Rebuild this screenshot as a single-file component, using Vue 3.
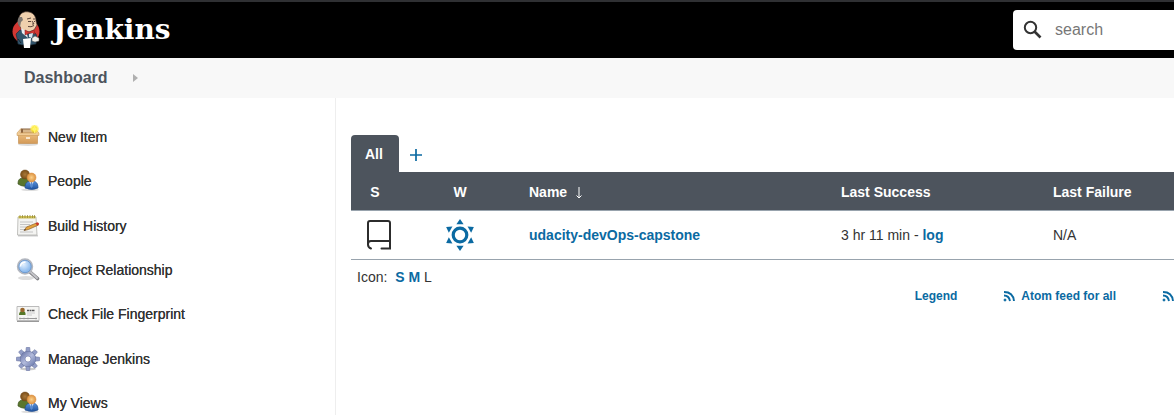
<script setup>
const tasks = [
  { label: 'New Item', icon: 'box' },
  { label: 'People', icon: 'people' },
  { label: 'Build History', icon: 'notepad' },
  { label: 'Project Relationship', icon: 'lens' },
  { label: 'Check File Fingerprint', icon: 'card' },
  { label: 'Manage Jenkins', icon: 'gear' },
  { label: 'My Views', icon: 'people' },
]
const teeth = [0, 45, 90, 135, 180, 225, 270, 315]
const rays = [0, 60, 120, 180, 240, 300]
</script>

<template>
  <div class="page">
    <svg class="defs" width="0" height="0" aria-hidden="true">
      <defs>
        <linearGradient id="gBox" x1="0" y1="0" x2="0" y2="1"><stop offset="0" stop-color="#eec080" /><stop offset="1" stop-color="#d39a58" /></linearGradient>
        <linearGradient id="gBlue" x1="0" y1="0" x2="0" y2="1"><stop offset="0" stop-color="#5b93dc" /><stop offset="1" stop-color="#1e52a0" /></linearGradient>
        <radialGradient id="gSkin"><stop offset="0" stop-color="#fbd089" /><stop offset="1" stop-color="#dd9240" /></radialGradient>
        <radialGradient id="gBrown"><stop offset="0" stop-color="#a9783a" /><stop offset="1" stop-color="#7a4d17" /></radialGradient>
        <linearGradient id="gGear" x1="0" y1="0" x2="1" y2="1"><stop offset="0" stop-color="#7883b2" /><stop offset=".5" stop-color="#b2bbdc" /><stop offset="1" stop-color="#7886b6" /></linearGradient>
        <radialGradient id="gLens" cx=".4" cy=".35"><stop offset="0" stop-color="#e4f1ff" /><stop offset="1" stop-color="#8fbcee" /></radialGradient>
        <radialGradient id="gGlow"><stop offset="0" stop-color="#fffbc0" /><stop offset=".45" stop-color="#ffec35" /><stop offset="1" stop-color="#ffe838" stop-opacity="0" /></radialGradient>
      </defs>
    </svg>

    <header class="header">
      <a class="brand" href="#">
        <svg class="butler" viewBox="0 0 28 38" aria-hidden="true">
          <ellipse cx="14" cy="20.500" rx="13.500" ry="12.500" fill="#d33833" />
          <path d="M4 23l4-4 12 1 4 3 1 4-1 6-5 1-2-1-7 1-4-1-1-6z" fill="#31536a" stroke="#172630" stroke-width=".6" />
          <path d="M7 7C8 2 12 0 17 1c5 1 7 5 7 9l1 4-3 5-5 2-7-2-3-5z" fill="#efd0ad" stroke="#503d35" stroke-width=".7" />
          <path d="M7 6c-2 3-2 7 1 10l1-5 2-2-1-3z" fill="#7d7771" />
          <path d="M15 8l4-1M21 8h2M16 10.500h3M22 10.500h1M20 10l2 3h-2M16 15.500q3 1 6-1" fill="none" stroke="#5c463c" stroke-width="1" />
          <path d="M9 17l5 3 2 7-6-5z" fill="#e8edf2" />
          <path d="M13 19l4 2 5-2 1 4-5-1-5 2z" fill="#d33833" stroke="#851f20" stroke-width=".5" />
          <path d="M17 23l4-1-1 5-3-1z" fill="#dce5ed" />
          <path d="M11 28l8-1-1 10h-6z" fill="#fff" />
          <path d="M20 27l3-2 4 2v3l-4 1-3-1z" fill="#f3f0e9" stroke="#555" stroke-width=".5" />
          <path d="M6 28l3 4" stroke="#172630" />
        </svg>
        <span class="wordmark">Jenkins</span>
      </a>
      <label class="search">
        <svg width="20" height="20" viewBox="0 0 20 20" fill="none" stroke="#333" aria-hidden="true">
          <circle cx="7.500" cy="7.500" r="5.700" stroke-width="2" /><path d="M11.500 11.500l6 6" stroke-width="2.600" />
        </svg>
        <input type="text" placeholder="search" aria-label="search">
      </label>
    </header>

    <nav class="crumbs" aria-label="Breadcrumb">
      <a href="#">Dashboard</a>
      <svg width="5" height="8" viewBox="0 0 5 8" aria-hidden="true"><path d="M0 0l5 4-5 4z" fill="#b0b0b0" /></svg>
    </nav>

    <div class="body">
      <nav class="side" aria-label="Tasks">
        <a v-for="task in tasks" :key="task.label" class="task" href="#">
          <svg width="24" height="24" viewBox="0 0 24 24" aria-hidden="true">
            <g v-if="task.icon === 'box'">
              <ellipse cx="12" cy="19.500" rx="10" ry="1.500" fill="#ddd" />
              <path d="M5 3.500h14v6H5z" fill="#8b6440" /><path d="M7 4.500h9l1 4H7z" fill="#d8b78c" />
              <path d="M2.500 8h19v10.500h-19z" fill="url(#gBox)" stroke="#c08a49" stroke-width=".6" />
              <path d="M5 3.500L1 8v2.500h22V8l-4-4.500 1 4.500H4z" fill="#f0cb96" stroke="#c4904f" stroke-width=".5" />
              <path d="M10 12h4v2h-4z" fill="#f9e6cb" />
              <circle cx="18.500" cy="4" r="5" fill="url(#gGlow)" /><path d="M18.500 0v8M14.500 4h8" stroke="#fff36a" stroke-width="1" />
            </g>
            <g v-else-if="task.icon === 'people'">
              <ellipse cx="14" cy="20.800" rx="9" ry="1.300" fill="#ddd" />
              <path d="M2 15c0-5 2-6 6-6s6 2 6 5v2q-6 3-12-1z" fill="#5a762d" stroke="#3b521c" stroke-width=".7" />
              <circle cx="9" cy="5.500" r="4.500" fill="url(#gBrown)" stroke="#6e471b" stroke-width=".5" />
              <path d="M9 19c0-5 2-7 6.500-7s6.500 2 6.500 7q-6 3-13 0z" fill="url(#gBlue)" stroke="#244f8d" stroke-width=".7" />
              <path d="M13 12h5l-2.500 5z" fill="#e7eff8" /><path d="M15 13h1l1 4-1.500 2-1.500-2z" fill="#5a8bd0" />
              <circle cx="15.500" cy="8.500" r="4.500" fill="url(#gSkin)" stroke="#d98a3e" stroke-width=".5" />
            </g>
            <g v-else-if="task.icon === 'notepad'">
              <path d="M2 21h20v1.500H2z" fill="#ccc" />
              <path d="M2 3h18l1 18H1.500z" fill="#f4f4f2" stroke="#b3b3af" stroke-width=".8" />
              <path d="M2.500 2h17v2.500h-17z" fill="#cfc158" /><path d="M4 1v3M6.500 1v3M9 1v3M11.500 1v3M14 1v3M16.500 1v3M18.500 1v3" stroke="#8c8232" stroke-width=".7" />
              <path d="M4 8h13M4 10.500h10M4 13h11M4 15.500h6M4 18h13" stroke="#c4c4c4" />
              <path d="M8 16.500l2.500-3.500 10-4 2 2-10 4.500z" fill="#e3a33d" stroke="#8c602e" stroke-width=".7" />
              <path d="M19.500 9.200l2-1 1.500 1-.5 1.700-1.500.5z" fill="#c9372b" /><path d="M8 16.500l1-1.500 1 1z" fill="#333" />
            </g>
            <g v-else-if="task.icon === 'lens'">
              <ellipse cx="10" cy="20" rx="8" ry="2" fill="#ddd" />
              <path d="M14 14l7.500 6.500" stroke="#808084" stroke-width="3.600" stroke-linecap="round" /><path d="M14.500 14l6.500 6" stroke="#c4c4c8" stroke-width="2" stroke-linecap="round" />
              <circle cx="9" cy="8.500" r="7.300" fill="url(#gLens)" stroke="#b3b7bf" stroke-width="1.800" /><circle cx="9" cy="8.500" r="6.200" fill="none" stroke="#6592c9" stroke-width=".8" />
              <path d="M4.500 8.500q0-4 5-4.500" fill="none" stroke="#fff" stroke-width="1.500" />
            </g>
            <g v-else-if="task.icon === 'card'">
              <path d="M1 4.500h22v14H1z" fill="#f5f5f3" stroke="#bbb" /><path d="M1 19.500h22" stroke="#999" />
              <path d="M3 13q0-4 3.500-4t3 4z" fill="#557727" /><circle cx="6.500" cy="8" r="2.300" fill="#99662b" />
              <path d="M11 8.500h8" stroke="#555" stroke-width="1.400" stroke-dasharray="2 .5" /><path d="M11 11h8M11 13h5" stroke="#ccc" />
              <path d="M3 16.500h18" stroke="#999" /><path d="M4 15.500v2M8 15.500v2M12 15.500v2M20 15.500v2" stroke="#999" stroke-width=".6" />
            </g>
            <g v-else>
              <ellipse cx="12" cy="22" rx="8" ry="1.300" fill="#ccc" />
              <path v-for="a in teeth" :key="a" d="M9.800 6l.5-5.500h3.400l.5 5.500z" fill="#929dc7" stroke="#7680aa" stroke-width=".7" :transform="`rotate(${a} 12 12)`" />
              <circle cx="12" cy="12" r="5.300" fill="none" stroke="#69749f" stroke-width="5.500" /><circle cx="12" cy="12" r="5.300" fill="none" stroke="url(#gGear)" stroke-width="4.600" />
              <circle cx="12" cy="12" r="3" fill="#fff" stroke="#7883b2" stroke-width=".7" />
            </g>
          </svg>
          <span>{{ task.label }}</span>
        </a>
      </nav>

      <main class="main">
        <div class="tabs">
          <a class="tab" href="#">All</a>
          <a class="add" href="#" aria-label="New View">
            <svg width="12" height="12" viewBox="0 0 12 12" aria-hidden="true"><path d="M6 0v12M0 6h12" stroke="#0b6aa2" stroke-width="1.700" /></svg>
          </a>
        </div>
        <table class="jobs">
          <colgroup><col class="c-s"><col class="c-w"><col class="c-name"><col class="c-success"><col></colgroup>
          <thead>
            <tr>
              <th class="status">S</th><th class="weather">W</th>
              <th><span class="sort">Name <svg width="8" height="14" viewBox="0 0 8 14" aria-label="Ascending"><path d="M4 2v11M1.500 10.500l2.500 2.500 2.500-2.500" fill="none" stroke="#fff" /></svg></span></th>
              <th>Last Success</th><th>Last Failure</th>
            </tr>
          </thead>
          <tbody>
            <tr>
              <td class="center">
                <svg width="26" height="32" viewBox="0 0 26 32" fill="none" stroke="#2c2c2c" stroke-width="2" role="img" aria-label="Not built">
                  <path d="M5 29.500q-3-1-3-4V4q0-2 2-2h18q2 0 2 2v25.500h-8.500M2 25q0-3 3-3h19" stroke-linecap="round" />
                </svg>
              </td>
              <td class="center">
                <svg width="32" height="32" viewBox="0 0 32 32" role="img" aria-label="Sunny">
                  <circle cx="16" cy="16" r="6.800" fill="none" stroke="#0b6aa2" stroke-width="3.200" />
                  <path v-for="a in rays" :key="a" d="M16 0l3.600 5.200h-7.200z" fill="#0b6aa2" :transform="`rotate(${a} 16 16)`" />
                </svg>
              </td>
              <td><a href="#">udacity-devOps-capstone</a></td>
              <td>3 hr 11 min - <a href="#">log</a></td>
              <td>N/A</td>
            </tr>
          </tbody>
        </table>
        <div class="sizes">Icon: <span class="options"><a href="#">S</a> <a href="#">M</a> L</span></div>
        <div class="feeds">
          <a href="#">Legend</a>
          <a href="#"><svg width="12" height="12" viewBox="0 0 12 12" fill="none" stroke="#0b6aa2" stroke-width="1.900" aria-hidden="true"><path d="M1 5.500q5 0 6 5.500M1 2q9 0 10 9" /><circle cx="2" cy="10" r="1" fill="#0b6aa2" stroke-width="1" /></svg>Atom feed for all</a>
          <a href="#" aria-label="Atom feed for failures"><svg width="12" height="12" viewBox="0 0 12 12" fill="none" stroke="#0b6aa2" stroke-width="1.900" aria-hidden="true"><path d="M1 5.500q5 0 6 5.500M1 2q9 0 10 9" /><circle cx="2" cy="10" r="1" fill="#0b6aa2" stroke-width="1" /></svg></a>
        </div>
      </main>
    </div>
  </div>
</template>

<style>
body { margin: 0; background: #fff; }
</style>

<style scoped>
* { box-sizing: border-box; }
.page { display: flex; flex-direction: column; height: 100vh; overflow: hidden; font: 14px/20px "Liberation Sans", Arial, sans-serif; color: #333; }
.page svg { display: block; flex: none; }
.page .defs { position: absolute; }
a { color: #0b6aa2; font-weight: bold; text-decoration: none; }
.header { flex: none; display: flex; justify-content: space-between; align-items: center; height: 58px; padding-left: 12px; background: #000; border-top: 2px solid #2f3033; }
.brand { display: flex; align-items: center; gap: 13px; }
.butler { width: 28px; height: 38px; }
.wordmark { font: bold 28px/40px "DejaVu Serif", Georgia, serif; color: #fff; }
.search { display: flex; align-items: center; gap: 12px; width: 161px; height: 40px; padding-left: 10px; background: #fff; border-radius: 4px 0 0 4px; }
.search input { width: 0; flex: 1; min-width: 0; margin: 0; padding: 0; border: 0; outline: 0; background: none; font: 16px/20px "Liberation Sans", Arial, sans-serif; color: #333; }
.search input::placeholder { color: #777; }
.crumbs { flex: none; display: flex; align-items: center; gap: 25px; height: 40px; padding-left: 24px; background: #f8f8f8; }
.crumbs a { font-size: 16px; line-height: 22px; color: #4d545d; }
.body { flex: 1; display: flex; min-height: 0; }
.side { flex: none; width: 336px; padding: 17px 16px 0; border-right: 1px solid #eee; display: grid; grid-template-rows: repeat(7, 1fr); height: 327px; }
.task { display: flex; align-items: center; gap: 8px; color: #333; font-weight: normal; text-shadow: 0 0 currentColor; }
.main { flex: 1; min-width: 0; padding: 37px 0 0 15px; }
.tabs { display: flex; }
.tab { padding: 9px 16px 8px 14px; background: #4d545d; color: #fff; border-radius: 4px 4px 0 0; }
.add { display: flex; align-items: center; padding: 3px 11px 0; }
.jobs { width: 100%; table-layout: fixed; border-collapse: collapse; }
.c-s { width: 56px; }
.c-w { width: 106px; }
.c-name { width: 312px; }
.c-success { width: 212px; }
th { height: 38px; padding: 2px 16px 0; background: #4d545d; color: #fff; text-align: left; }
.status { padding: 2px 8px 0 0; text-align: center; }
.weather { text-align: center; }
.sort { display: flex; align-items: center; gap: 8px; }
td { height: 49px; padding: 0 16px; border-top: 1px solid #98a3ad; border-bottom: 1px solid #98a3ad; }
td.center { padding: 0; }
.center svg { margin: 0 auto; }
.sizes { padding: 7px 6px 0; }
.options { margin-left: 4px; }
.feeds { display: flex; justify-content: flex-end; gap: 46px; font-size: 12px; line-height: 18px; }
.feeds a { display: flex; align-items: center; gap: 6px; }
</style>
